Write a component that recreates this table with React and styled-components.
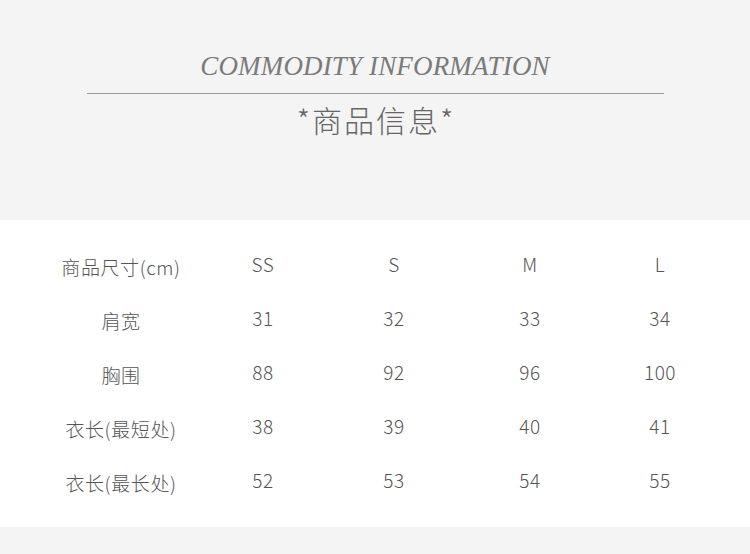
import React from 'react'
import styled, { createGlobalStyle } from 'styled-components'

const sizes = ['SS', 'S', 'M', 'L']

const rows = [
    { label: '肩宽', values: ['31', '32', '33', '34'] },
    { label: '胸围', values: ['88', '92', '96', '100'] },
    { label: '衣长(最短处)', values: ['38', '39', '40', '41'] },
    { label: '衣长(最长处)', values: ['52', '53', '54', '55'] },
]

const App = () => {
    return (
        <Wrapper>
            <GlobalStyle />
            <Header>
                <Title>COMMODITY INFORMATION</Title>
                <Divider />
                <SubTitle>*商品信息*</SubTitle>
            </Header>
            <Panel>
                <Row>
                    <Label>商品尺寸(cm)</Label>
                    {sizes.map(s => <Value key={s}>{s}</Value>)}
                </Row>
                {rows.map(r => (
                    <Row key={r.label}>
                        <Label>{r.label}</Label>
                        {r.values.map((v, i) => <Value key={i}>{v}</Value>)}
                    </Row>
                ))}
            </Panel>
            <Footer />
        </Wrapper>
    )
}

export default App

const GlobalStyle = createGlobalStyle`
    body {
        margin: 0;
        background: #f4f4f4;
    }
`

const Wrapper = styled.div`
    width: 750px;
    height: 554px;
    background: #f4f4f4;
    display: flex;
    flex-direction: column;
`

const Header = styled.div`
    height: 220px;
    display: flex;
    flex-direction: column;
    align-items: center;
    padding-top: 50px;
    box-sizing: border-box;
`

const Title = styled.div`
    font-family: "Liberation Serif", serif;
    font-style: italic;
    font-size: 27px;
    color: #7a7a7a;
    line-height: 32px;
    letter-spacing: 0.15px;
`

const Divider = styled.div`
    width: 577px;
    height: 1px;
    background: #999;
    margin-top: 11px;
`

const SubTitle = styled.div`
    font-family: "Noto Sans CJK SC", sans-serif;
    font-weight: 300;
    font-size: 30px;
    color: #666;
    line-height: 40px;
    letter-spacing: 2px;
    margin-top: 5px;
    margin-right: -2px;
`

const Panel = styled.div`
    height: 307px;
    background: #fff;
    padding: 20px 0 17px 40px;
    box-sizing: border-box;
    display: flex;
    flex-direction: column;
`

const Row = styled.div`
    height: 54px;
    display: grid;
    grid-template-columns: 162px 122px 140px 132px 128px;
    align-items: center;
    font-family: "Noto Sans CJK SC", sans-serif;
    font-weight: 300;
    color: #555;
`

const Label = styled.div`
    text-align: center;
    font-size: 19px;
    letter-spacing: 0.6px;
    margin-top: -1px;
`

const Value = styled.div`
    text-align: center;
    font-size: 19px;
    letter-spacing: 0.5px;
    margin-top: -7px;
`

const Footer = styled.div`
    flex: 1;
    background: #f4f4f4;
`
